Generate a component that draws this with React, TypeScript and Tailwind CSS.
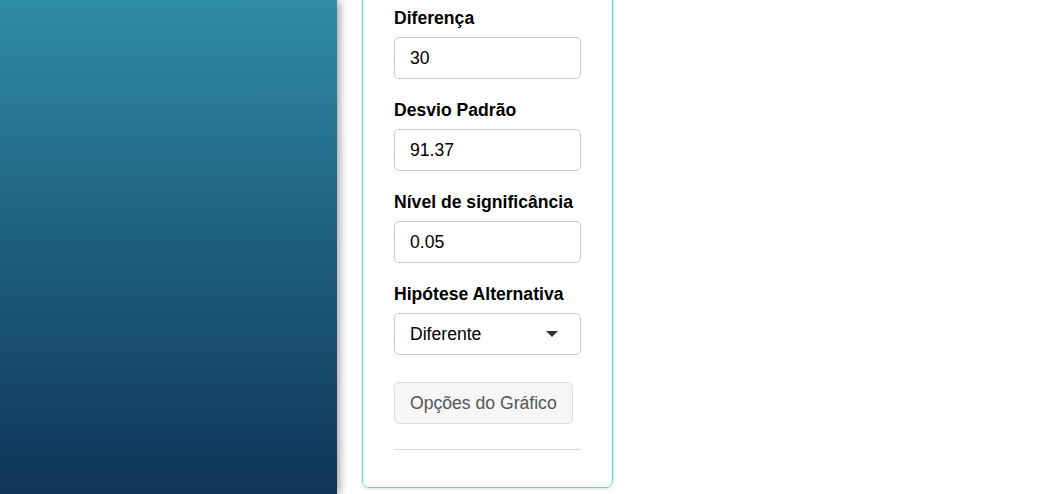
import React from 'react';

const fields = [
  { label: 'Diferença', value: '30' },
  { label: 'Desvio Padrão', value: '91.37' },
  { label: 'Nível de significância', value: '0.05' },
];

function Field({ label, value }: { label: string; value: string }) {
  return (
    <div className="mb-[21px]">
      <label className="block text-[17.6px] leading-[20px] font-bold text-black mb-[9px]">{label}</label>
      <input
        readOnly
        value={value}
        className="w-full h-[42px] border border-[#cccccc] rounded-[5px] px-[15px] text-[17.6px] text-black bg-white outline-none"
      />
    </div>
  );
}

export default function App() {
  return (
    <div className="h-[494px] overflow-hidden flex bg-white font-['Liberation_Sans',Arial,sans-serif]">
      <aside className="w-[337px] shrink-0 h-full bg-gradient-to-b from-[#2f8ca7] to-[#0f3457] shadow-[3px_0_8px_rgba(0,0,0,0.35)] z-10" />
      <main className="flex-1 pl-[25px]">
        <div className="w-[251px] -mt-[30px] border border-[#3fe9d6] rounded-[7px] shadow-[0_1px_3px_rgba(0,0,0,0.12)] px-[31px] pt-[37px] pb-[37px]">
          {fields.map((f) => (
            <Field key={f.label} label={f.label} value={f.value} />
          ))}
          <div className="mb-[27px]">
            <label className="block text-[17.6px] leading-[20px] font-bold text-black mb-[9px]">Hipótese Alternativa</label>
            <div className="w-full h-[42px] border border-[#cccccc] rounded-[5px] pl-[15px] pr-[22px] flex items-center justify-between text-[17.6px] text-black bg-white">
              <span>Diferente</span>
              <svg width="12" height="6" viewBox="0 0 12 6">
                <path d="M0 0h12L6 6z" fill="#333" />
              </svg>
            </div>
          </div>
          <button className="h-[42px] px-[15px] border border-[#dddddd] rounded-[5px] bg-[#f6f6f6] text-[17.6px] text-[#555555]">
            Opções do Gráfico
          </button>
          <hr className="mt-[25px] border-0 border-t border-[#dddddd]" />
        </div>
      </main>
    </div>
  );
}
